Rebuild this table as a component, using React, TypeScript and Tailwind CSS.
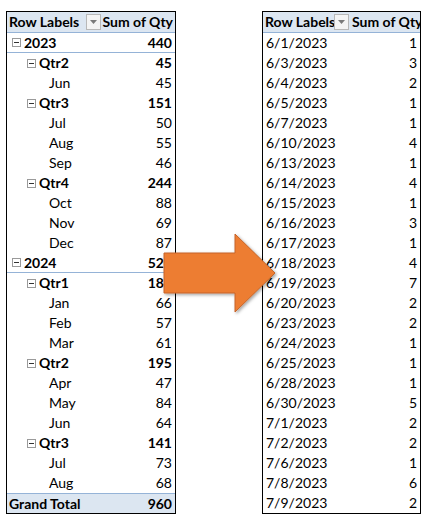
import React from "react"

type Row = { label: string; value: number; level: 0 | 1 | 2 }

const pivotRows: Row[] = [
  { label: "2023", value: 440, level: 0 },
  { label: "Qtr2", value: 45, level: 1 },
  { label: "Jun", value: 45, level: 2 },
  { label: "Qtr3", value: 151, level: 1 },
  { label: "Jul", value: 50, level: 2 },
  { label: "Aug", value: 55, level: 2 },
  { label: "Sep", value: 46, level: 2 },
  { label: "Qtr4", value: 244, level: 1 },
  { label: "Oct", value: 88, level: 2 },
  { label: "Nov", value: 69, level: 2 },
  { label: "Dec", value: 87, level: 2 },
  { label: "2024", value: 520, level: 0 },
  { label: "Qtr1", value: 184, level: 1 },
  { label: "Jan", value: 66, level: 2 },
  { label: "Feb", value: 57, level: 2 },
  { label: "Mar", value: 61, level: 2 },
  { label: "Qtr2", value: 195, level: 1 },
  { label: "Apr", value: 47, level: 2 },
  { label: "May", value: 84, level: 2 },
  { label: "Jun", value: 64, level: 2 },
  { label: "Qtr3", value: 141, level: 1 },
  { label: "Jul", value: 73, level: 2 },
  { label: "Aug", value: 68, level: 2 },
]

const dateRows: [string, number][] = [
  ["6/1/2023", 1], ["6/3/2023", 3], ["6/4/2023", 2], ["6/5/2023", 1],
  ["6/7/2023", 1], ["6/10/2023", 4], ["6/13/2023", 1], ["6/14/2023", 4],
  ["6/15/2023", 1], ["6/16/2023", 3], ["6/17/2023", 1], ["6/18/2023", 4],
  ["6/19/2023", 7], ["6/20/2023", 2], ["6/23/2023", 2], ["6/24/2023", 1],
  ["6/25/2023", 1], ["6/28/2023", 1], ["6/30/2023", 5], ["7/1/2023", 2],
  ["7/2/2023", 2], ["7/6/2023", 1], ["7/8/2023", 6], ["7/9/2023", 2],
]

function Minus() {
  return (
    <span className="w-[9px] h-[9px] border border-[#9a9a9a] bg-white flex items-center justify-center mr-[3px] shrink-0">
      <span className="w-[5px] h-px bg-[#333]" />
    </span>
  )
}

function Dropdown() {
  return (
    <span className="w-[15px] h-[16px] border border-[#b8b8b8] bg-[#f4f4f4] flex items-center justify-center shrink-0">
      <svg width="7" height="4" viewBox="0 0 7 4"><path d="M0 0h7L3.5 4z" fill="#7a7a7a" /></svg>
    </span>
  )
}

export default function App() {
  return (
    <div className="relative w-[429px] h-[520px] bg-white text-black text-[14px] leading-none" style={{ fontFamily: "Lato, 'Open Sans', sans-serif" }}>
      <div className="flex items-start pt-[11px] pl-[6px] gap-[86px]">
        {/* pivot by year/quarter */}
        <div className="w-[170px] border border-black">
          <div className="h-[21px] flex items-center bg-[#dce6f1] border-b border-[#95b3d7] font-bold whitespace-nowrap">
            <span className="pl-[2px] w-[79px]">Row Labels</span>
            <Dropdown />
            <span className="ml-auto pr-[2px]">Sum of Qty</span>
          </div>
          {pivotRows.map((r, i) => (
            <div
              key={i}
              className={
                "h-[20px] flex items-center pr-[3px] " +
                (r.level === 0 ? "border-b border-[#95b3d7] font-bold pl-[5px]" : r.level === 1 ? "font-bold pl-[20px]" : "pl-[42px]")
              }
            >
              {r.level < 2 && <Minus />}
              <span>{r.label}</span>
              <span className="ml-auto">{r.value}</span>
            </div>
          ))}
          <div className="h-[20px] flex items-center bg-[#dce6f1] border-t border-[#95b3d7] font-bold px-[2px]">
            <span>Grand Total</span>
            <span className="ml-auto pr-[1px]">960</span>
          </div>
        </div>

        {/* flat dates */}
        <div className="w-[159px] border border-black overflow-hidden">
          <div className="h-[21px] flex items-center bg-[#dce6f1] border-b border-[#95b3d7] font-bold whitespace-nowrap">
            <span className="pl-[2px] w-[71px] shrink-0 overflow-hidden">Row Labels</span>
            <Dropdown />
            <span className="pl-[3px] shrink-0">Sum of Qty</span>
          </div>
          {dateRows.map(([d, q]) => (
            <div key={d} className="h-[20px] flex items-center pl-[3px] pr-[3px]">
              <span>{d}</span>
              <span className="ml-auto">{q}</span>
            </div>
          ))}
        </div>
      </div>

      <svg className="absolute left-0 top-0 pointer-events-none" width="429" height="520">
        <defs>
          <filter id="sh" x="-20%" y="-20%" width="140%" height="140%">
            <feDropShadow dx="1.5" dy="1.5" stdDeviation="1.5" floodColor="#000" floodOpacity="0.35" />
          </filter>
        </defs>
        <polygon
          points="164,253 235,253 235,234 275,273 235,312 235,293 164,293"
          fill="#ed7d31"
          stroke="#c5652a"
          strokeWidth="1"
          filter="url(#sh)"
        />
      </svg>
    </div>
  )
}
